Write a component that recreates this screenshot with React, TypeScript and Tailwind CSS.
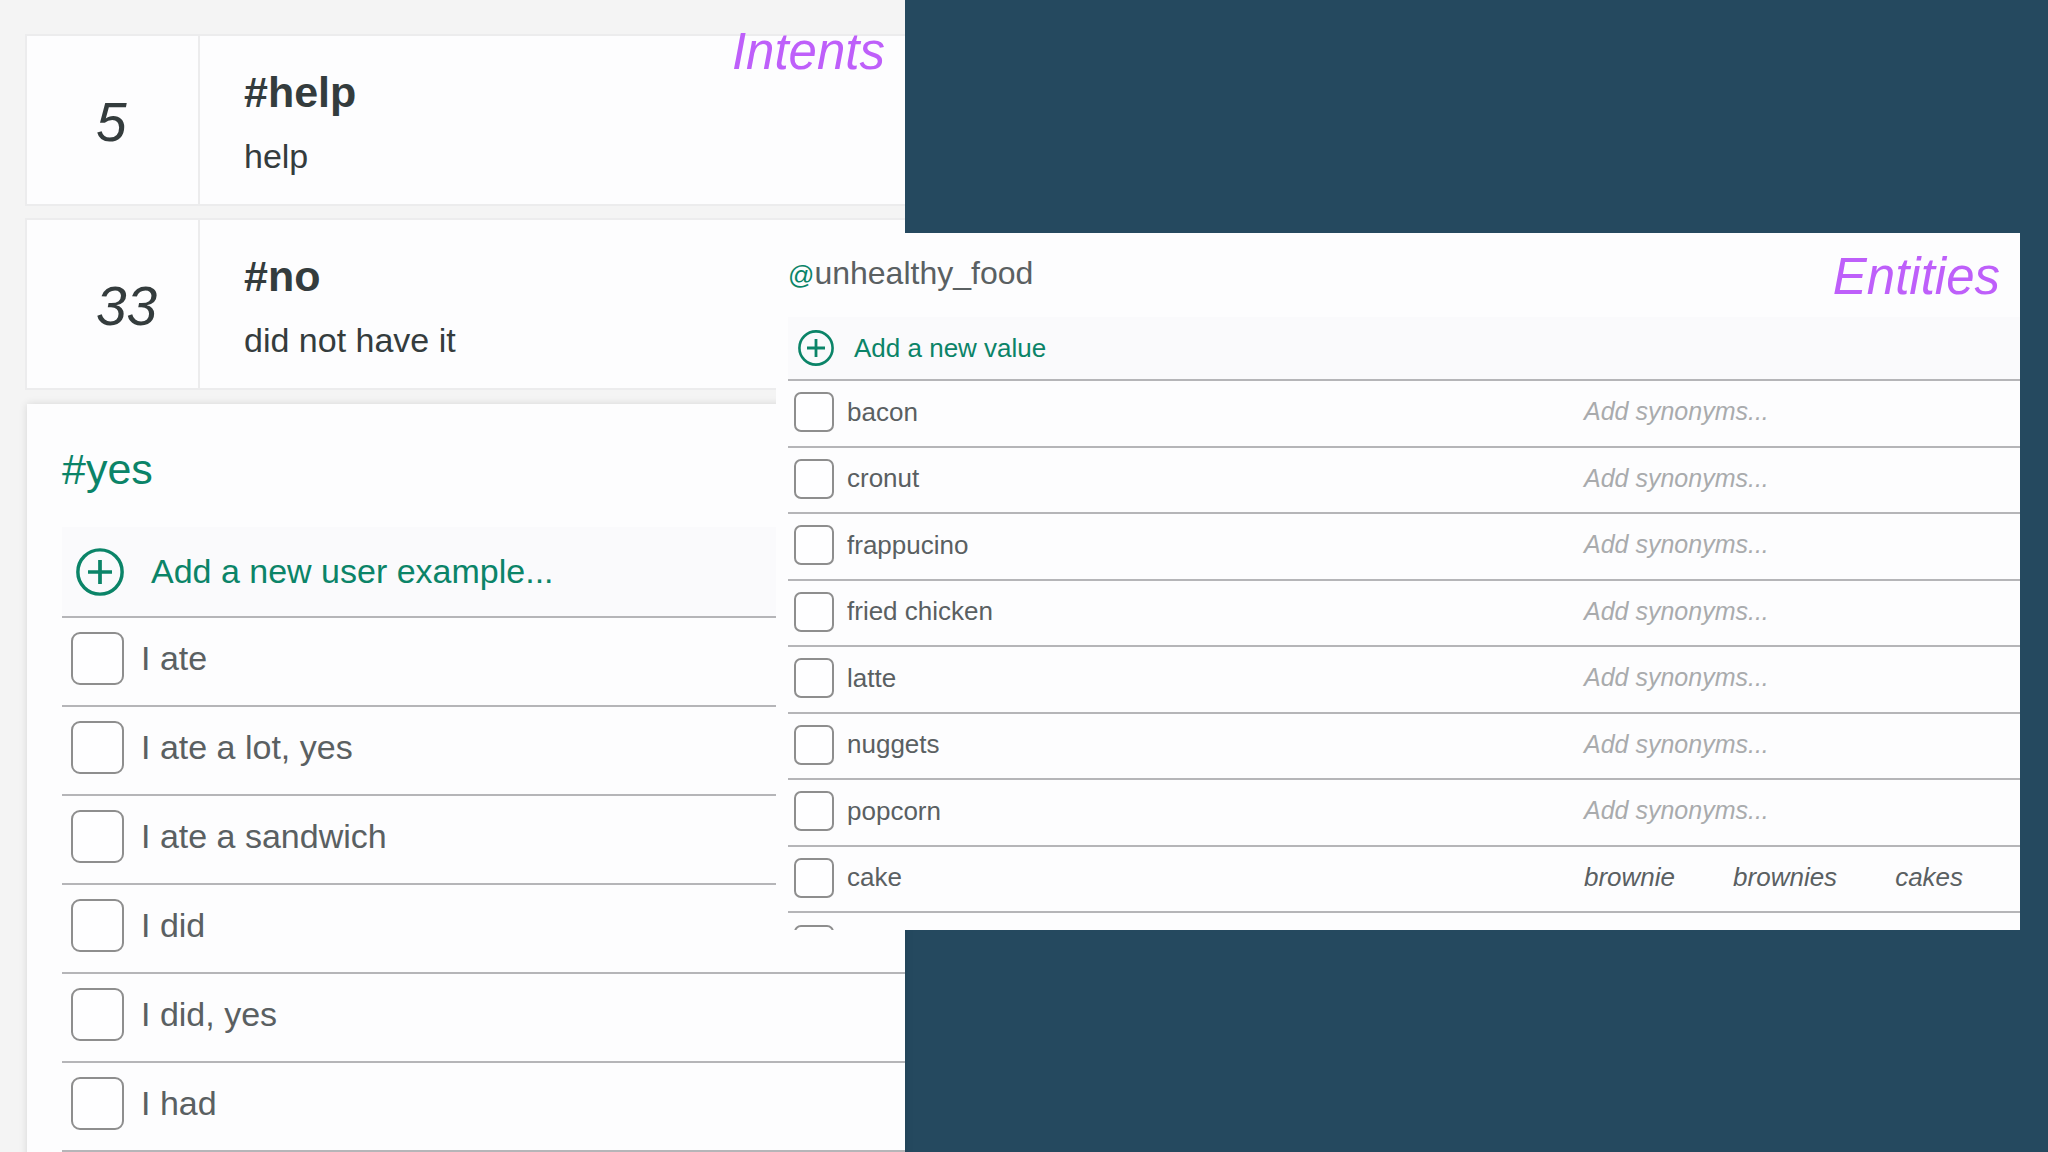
import { clsx } from "clsx";

const intents: { count: number; name: string; example: string }[] = [
  { count: 5, name: "#help", example: "help" },
  { count: 33, name: "#no", example: "did not have it" },
];

const examples = [
  "I ate",
  "I ate a lot, yes",
  "I ate a sandwich",
  "I did",
  "I did, yes",
  "I had",
];

const entityValues: { name: string; synonyms: string[] }[] = [
  { name: "bacon", synonyms: [] },
  { name: "cronut", synonyms: [] },
  { name: "frappucino", synonyms: [] },
  { name: "fried chicken", synonyms: [] },
  { name: "latte", synonyms: [] },
  { name: "nuggets", synonyms: [] },
  { name: "popcorn", synonyms: [] },
  { name: "cake", synonyms: ["brownie", "brownies", "cakes"] },
];

const PlusCircle = ({ className }: { className?: string }) => (
  <svg
    viewBox="0 0 36 36"
    fill="none"
    stroke="currentColor"
    className={clsx("shrink-0", className)}
    aria-hidden="true"
  >
    <circle cx="18" cy="18" r="16.6" strokeWidth="2.6" />
    <path d="M18 9v18M9 18h18" strokeWidth="2.8" />
  </svg>
);

const checkbox = "shrink-0 appearance-none border-2 border-[#8e8e8e] bg-[#fefeff]";

const IntentCard = ({ count, name, example }: (typeof intents)[number]) => (
  <article className="flex border-2 border-r-0 border-[#ececed] bg-[#fdfdfe] text-[#343c3d]">
    <div className="flex w-[173px] shrink-0 items-center border-r-2 border-[#ececed] pt-1 pl-[69px] text-[55px] leading-none font-light italic">
      {count}
    </div>
    <div className="py-7 pl-11">
      <h2 className="text-[43px] leading-[56px] font-bold">{name}</h2>
      <p className="mt-4 text-[34px] leading-10">{example}</p>
    </div>
  </article>
);

const Intents = () => (
  <section className="relative col-span-2 col-start-1 row-start-1 bg-[#f4f4f4] pt-[34px] pl-[25px]">
    <p className="absolute top-[27px] right-5 text-[51px] leading-[50px] text-[#be5ffa] italic">
      Intents
    </p>
    <div className="flex flex-col gap-3">
      {intents.map((intent) => (
        <IntentCard key={intent.name} {...intent} />
      ))}
    </div>
    <article className="mt-[14px] ml-[2px] h-full bg-[#fdfdfe] pt-10 pl-[35px] shadow-[0_0_8px_rgba(0,0,0,0.12)]">
      <h2 className="mb-8 text-[43px] leading-[51px] text-[#0b8468]">#yes</h2>
      <button
        type="button"
        className="flex h-[91px] w-full items-center gap-[27px] border-b-2 border-[#b5b5b8] bg-[#fafafc] pl-[14px] text-left text-[34px] text-[#0b8468]"
      >
        <PlusCircle className="size-12" />
        Add a new user example...
      </button>
      <ul>
        {examples.map((example) => (
          <li key={example} className="border-b-2 border-[#b5b5b8]">
            <label className="flex h-[87px] items-center gap-[17px] pb-[6px] pl-[9px] text-[34px] text-[#5a6062]">
              <input type="checkbox" className={clsx(checkbox, "size-[53px] rounded-[9px]")} />
              {example}
            </label>
          </li>
        ))}
      </ul>
    </article>
  </section>
);

const Entities = () => (
  <section className="relative col-span-2 col-start-2 row-start-1 mt-[233px] max-h-[697px] self-start overflow-hidden bg-[#fdfdfe] pt-5 pl-3">
    <p className="absolute top-[19px] right-5 text-[51px] leading-[50px] text-[#be5ffa] italic">
      Entities
    </p>
    <h2 className="mb-6 text-[32px] leading-10 text-[#5a6062]">
      <span className="text-[26px] leading-none text-[#0b8468]">@</span>unhealthy_food
    </h2>
    <button
      type="button"
      className="flex h-16 w-full items-center gap-5 border-b-2 border-[#b5b5b8] bg-[#fafafc] pl-[10px] text-left text-[26px] text-[#0b8468]"
    >
      <PlusCircle className="size-9" />
      Add a new value
    </button>
    <table className="w-full table-fixed border-separate border-spacing-0 text-[26px] text-[#5a6062]">
      <tbody>
        {entityValues.map(({ name, synonyms }) => (
          <tr key={name} className="odd:h-[67px] even:h-[66px]">
            <td className="border-b-2 border-[#b5b5b8] pb-[3px]">
              <label className="flex items-center gap-[13px] pl-[6px]">
                <input type="checkbox" className={clsx(checkbox, "size-10 rounded-[7px]")} />
                {name}
              </label>
            </td>
            <td className="w-[436px] border-b-2 border-[#b5b5b8] pb-[3px] italic">
              {synonyms.length > 0 ? (
                <ul className="flex gap-[58px]">
                  {synonyms.map((synonym) => (
                    <li key={synonym}>{synonym}</li>
                  ))}
                </ul>
              ) : (
                <button type="button" className="block text-[25px] text-[#a9abad]">
                  Add synonyms...
                </button>
              )}
            </td>
          </tr>
        ))}
        <tr className="h-[66px]">
          <td colSpan={2} className="pb-[3px] pl-[6px]">
            <input
              type="checkbox"
              aria-label="Select value"
              className={clsx(checkbox, "block size-10 rounded-[7px]")}
            />
          </td>
        </tr>
      </tbody>
    </table>
  </section>
);

const App = () => {
  return (
    <main className="grid h-screen grid-cols-[776fr_129fr_1115fr_28fr] grid-rows-[100%] overflow-hidden bg-[#25495f] font-['Liberation_Sans',Arial,sans-serif]">
      <Intents />
      <Entities />
    </main>
  );
};

export default App;
